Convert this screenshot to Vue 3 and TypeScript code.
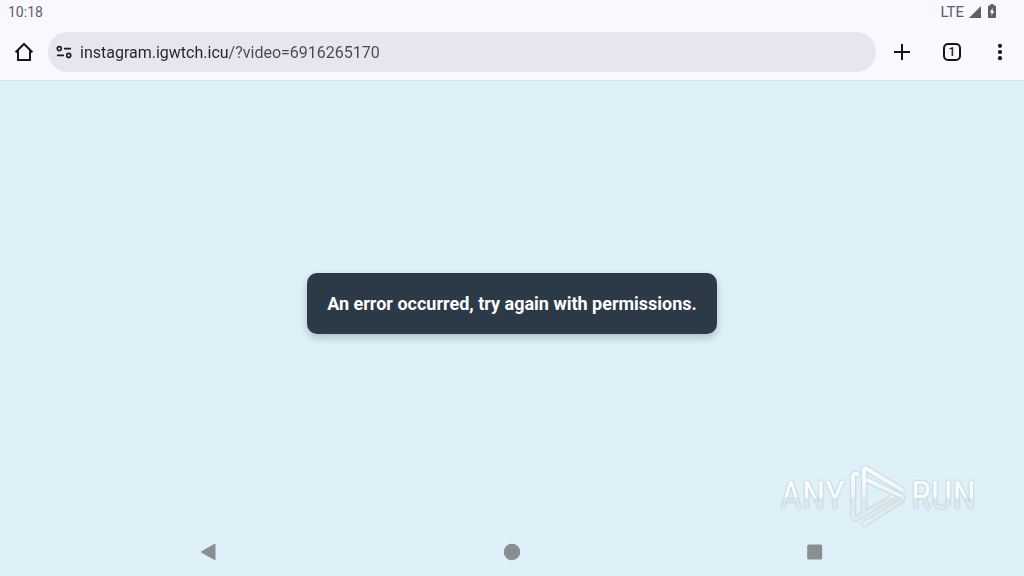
<script setup lang="ts">
import { ref } from 'vue'

const address = ref('instagram.igwtch.icu/?video=6916265170')
const tabCount = ref(1)
</script>

<template>
  <div class="screen">
    <header class="status">
      <time>10:18</time>
      <div class="signals">
        <span>LTE</span>
        <svg class="signal" viewBox="0 0 12 12" aria-hidden="true"><path d="M12 0v12H0z" /></svg>
        <svg class="battery" viewBox="0 0 8 14" aria-hidden="true">
          <path fill-rule="evenodd" d="M2.5 0h3v1.4H7q1 0 1 1V13q0 1-1 1H1q-1 0-1-1V2.400q0-1 1-1h1.500zM4.700 3.800 1.800 8.500h1.700v3.200l2.800-4.800H4.700z" />
        </svg>
      </div>
    </header>

    <div class="toolbar">
      <button class="tool" type="button" aria-label="Home">
        <svg viewBox="0 0 24 24"><path d="M3.600 12.200 12 4l8.400 8.200M6 10.500V20h12v-9.500" /></svg>
      </button>
      <div class="omnibox">
        <button class="site" type="button" aria-label="Site information">
          <svg viewBox="0 0 16 16"><circle cx="3.300" cy="4.600" r="2" /><path d="M8 4.600h7M1 11.400h7" /><circle cx="12.700" cy="11.400" r="2" /></svg>
        </button>
        <input v-model="address" type="text" aria-label="Address" spellcheck="false" />
      </div>
      <button class="tool plus" type="button" aria-label="New tab">
        <svg viewBox="0 0 24 24"><path d="M12 4v16M4 12h16" /></svg>
      </button>
      <button class="tool tabs" type="button" aria-label="Open tabs">
        <span>{{ tabCount }}</span>
      </button>
      <button class="tool more" type="button" aria-label="More options">
        <svg viewBox="0 0 24 24"><circle cx="12" cy="5.800" r="2.100" /><circle cx="12" cy="12" r="2.100" /><circle cx="12" cy="18.200" r="2.100" /></svg>
      </button>
    </div>

    <main class="page">
      <p class="message" role="alert">An error occurred, try again with permissions.</p>
    </main>

    <nav class="navigation" aria-label="System navigation">
      <button type="button" aria-label="Back"><svg viewBox="0 0 18 18"><path d="M15.500 1.500v15q0 1-1 .4L1.500 9.700q-1-.7 0-1.400L14.500.8q1-.4 1 .7z" /></svg></button>
      <button type="button" aria-label="Home"><svg viewBox="0 0 18 18"><circle cx="9" cy="9" r="8.300" /></svg></button>
      <button type="button" aria-label="Recent apps"><svg viewBox="0 0 18 18"><rect x="1.200" y="1.500" width="15" height="15" rx="1.500" /></svg></button>
    </nav>

    <div class="watermark">
      <span>ANY</span>
      <svg viewBox="0 0 60 64" aria-hidden="true">
        <defs>
          <linearGradient id="sheen" x1="0" y1="0" x2="0" y2="1">
            <stop offset="0" stop-color="#f8fcff" />
            <stop offset=".5" stop-color="#edf4f9" />
            <stop offset=".56" stop-color="#dce5ea" />
            <stop offset="1" stop-color="#e4edf2" />
          </linearGradient>
        </defs>
        <path
          class="emblem"
          stroke="url(#sheen)"
          d="M9 10Q5 9 5 13V51Q5 56 9 54L16 50L45 33M16 50V6Q16 3 19 5L54 26M17 15L53 32Q56 34 53 37L16 60"
        />
      </svg>
      <span>RUN</span>
    </div>
  </div>
</template>

<style>
body {
  margin: 0;
}
</style>

<style scoped>
.screen {
  position: relative;
  display: flex;
  flex-direction: column;
  min-height: 100vh;
  background: #def0f8;
  color: #1b1b21;
  font-family: Roboto, "Liberation Sans", sans-serif;
}

button {
  display: grid;
  place-items: center;
  padding: 0;
  border: 0;
  background: none;
  color: inherit;
  font: inherit;
}

.status {
  display: flex;
  align-items: center;
  justify-content: space-between;
  height: 24px;
  padding: 0 28px 0 8px;
  background: #f9f7ff;
  color: #5f5e66;
  font-size: 14px;
}

.signals {
  display: flex;
  align-items: center;
  gap: 5px;
}

.signals span {
  font-size: 15px;
}

.signals svg {
  fill: #5f5e62;
}

.signal {
  width: 12px;
  height: 12px;
  margin-right: 2px;
}

.battery {
  width: 8px;
  height: 14px;
  margin-bottom: 2px;
}

.toolbar {
  display: flex;
  align-items: center;
  height: 56px;
  background: #f9f7ff;
}

.tool {
  flex: none;
  width: 48px;
  height: 48px;
}

.tool svg {
  width: 24px;
  height: 24px;
  fill: none;
  stroke: #16161b;
  stroke-width: 2;
}

.more svg {
  fill: #16161b;
  stroke: none;
}

.plus {
  width: 52px;
}

.tabs span {
  display: grid;
  place-items: center;
  box-sizing: border-box;
  width: 18px;
  height: 18px;
  border: 2px solid #16161b;
  border-radius: 5px;
  font-size: 12px;
  font-weight: 500;
  line-height: 14px;
}

.omnibox {
  display: flex;
  flex: 1;
  align-items: center;
  min-width: 0;
  height: 40px;
  border-radius: 20px;
  background: #e7e5ee;
}

.site {
  flex: none;
  width: 32px;
  height: 40px;
}

.site svg {
  width: 16px;
  height: 16px;
  fill: none;
  stroke: #1b1b21;
  stroke-width: 1.6;
}

.omnibox input {
  flex: 1;
  min-width: 0;
  height: 24px;
  padding: 2px 0 0;
  border: 0;
  outline: 0;
  background: linear-gradient(90deg, #24242a 148px, #494850 148px);
  background-clip: text;
  color: transparent;
  font: 16px/24px Roboto, "Liberation Sans", sans-serif;
}

.page {
  display: flex;
  flex: 1;
  align-items: center;
  justify-content: center;
  padding-bottom: 1px;
  box-shadow: inset 0 1px #d3e4ec;
}

.message {
  margin: 0;
  padding: 20px;
  border-radius: 10px;
  background: #2c3947;
  box-shadow: 0 4px 8px rgba(0, 0, 0, 0.2);
  color: #fff;
  font-size: 18px;
  font-weight: 700;
  line-height: 21px;
}

.navigation {
  display: grid;
  grid-template-columns: repeat(3, 1fr);
  height: 48px;
  padding: 0 57px;
}

.navigation svg {
  width: 18px;
  height: 18px;
  fill: #8a8e91;
}

.watermark {
  position: absolute;
  right: 48px;
  bottom: 48px;
  display: flex;
  align-items: center;
  gap: 3px;
  pointer-events: none;
}

.watermark span {
  background: linear-gradient(#f8fcff 52%, #dce5ea 56%, #e4edf2);
  background-clip: text;
  color: transparent;
  filter: drop-shadow(0 0 1px #a8bac4);
  font: 38px/48px "Liberation Sans Narrow", "Roboto Condensed", Roboto, sans-serif;
}

.watermark svg {
  width: 60px;
  height: 64px;
}

.emblem {
  fill: none;
  stroke-width: 4;
  stroke-linecap: round;
  stroke-linejoin: round;
  filter: drop-shadow(0 0 1px #a8bac4);
}
</style>
